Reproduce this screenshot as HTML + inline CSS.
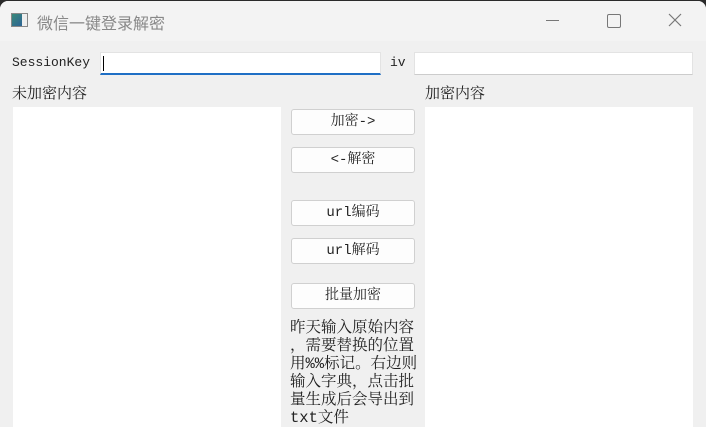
<!DOCTYPE html>
<html><head><meta charset="utf-8"><style>
html,body{margin:0;padding:0}
body{width:706px;height:427px;overflow:hidden;background:#2a2a2a;position:relative;font-family:"Liberation Mono","Noto Serif CJK SC",monospace;color:#222}
.win{position:absolute;left:0;top:1px;width:706px;height:426px;background:#f0f0f0;border-top-right-radius:8px;border-top-left-radius:8px;overflow:hidden}
.title{position:absolute;left:0;top:0;width:706px;height:40px;background:#f3f3f3}
.t{position:absolute;font-size:13px;white-space:nowrap}
.cj{font-family:"Liberation Mono","Noto Serif CJK SC",serif}
.inp{position:absolute;background:#fff;box-sizing:border-box;border:1px solid #e3e3e3}
.box{position:absolute;background:#fff}
.btn{position:absolute;left:291px;width:124px;height:26px;box-sizing:border-box;background:#fdfdfd;border:1px solid #d0d0d0;border-radius:3px;font-size:14px;text-align:center;line-height:24px}
</style></head><body><div class="win">
<div class="title">
 <div style="position:absolute;left:11px;top:12px;width:17px;height:14px;border:1px solid #888;box-sizing:border-box;background:linear-gradient(135deg,#3a8a7a,#2a5a9a)"><div style="position:absolute;right:0;top:0;width:5px;height:12px;background:#eee"></div></div>
 <div class="t" style="left:37px;top:9px;font-size:16px;color:#888;font-family:'Noto Sans CJK SC',sans-serif">微信一键登录解密</div>
 <div style="position:absolute;left:546px;top:19px;width:13px;height:1px;background:#777"></div>
 <div style="position:absolute;left:607px;top:13px;width:12px;height:12px;border:1px solid #777;border-radius:2px"></div>
 <svg style="position:absolute;left:668px;top:12px" width="14" height="14"><path d="M1 1L13 13M13 1L1 13" stroke="#777" stroke-width="1.2"/></svg>
</div>
<div class="t" style="left:12px;top:54px">SessionKey</div>
<div class="inp" style="left:100px;top:51px;width:281px;height:23px;border-bottom:2px solid #1f6fc5"></div>
<div style="position:absolute;left:103px;top:55px;width:1px;height:15px;background:#000"></div>
<div class="t" style="left:390px;top:54px">iv</div>
<div class="inp" style="left:414px;top:51px;width:279px;height:23px;border-bottom:1px solid #ccc"></div>
<div class="t cj" style="left:12px;top:81px;font-size:15px">未加密内容</div>
<div class="t cj" style="left:425px;top:81px;font-size:15px">加密内容</div>
<div class="box" style="left:13px;top:106px;width:268px;height:330px"></div>
<div class="box" style="left:425px;top:106px;width:268px;height:330px"></div>
<div class="btn cj" style="top:108px">加密-&gt;</div>
<div class="btn cj" style="top:146px">&lt;-解密</div>
<div class="btn cj" style="top:199px">url编码</div>
<div class="btn cj" style="top:237px">url解码</div>
<div class="btn cj" style="top:282px">批量加密</div>
<div class="t cj" style="left:290px;top:318px;font-size:15.5px;line-height:18px">昨天输入原始内容<br>，需要替换的位置<br>用%%标记。右边则<br>输入字典，点击批<br>量生成后会导出到<br>txt文件</div>
</div></body></html>
